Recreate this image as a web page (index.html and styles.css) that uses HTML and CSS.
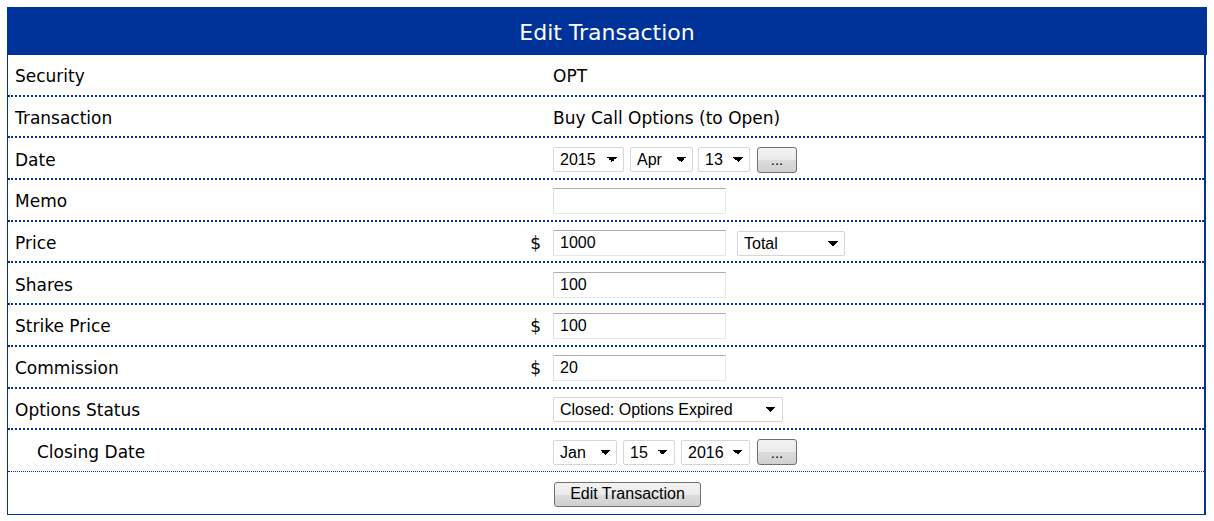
FILE: index.html
```html
<!DOCTYPE html>
<html lang="en">
<head>
    <meta charset="UTF-8">
    <title>Edit Transaction</title>
    <link rel="stylesheet" href="styles.css">
</head>
<body>

    <!-- Edit transaction form -->
    <form class="panel" onsubmit="return false">
        <div class="panel-title">Edit Transaction</div>

        <div class="row">
            <div class="label">Security</div>
            <div class="unit"></div>
            <div class="value">OPT</div>
        </div>

        <div class="row">
            <div class="label">Transaction</div>
            <div class="unit"></div>
            <div class="value">Buy Call Options (to Open)</div>
        </div>

        <div class="row">
            <div class="label">Date</div>
            <div class="unit"></div>
            <div class="value">
                <select class="sel sel-year"><option>2015</option></select>
                <select class="sel sel-month"><option>Apr</option></select>
                <select class="sel sel-day"><option>13</option></select>
                <button type="button" class="btn btn-cal">...</button>
            </div>
        </div>

        <div class="row">
            <div class="label">Memo</div>
            <div class="unit"></div>
            <div class="value"><input type="text" class="txt" value=""></div>
        </div>

        <div class="row">
            <div class="label">Price</div>
            <div class="unit">$</div>
            <div class="value">
                <input type="text" class="txt" value="1000">
                <select class="sel sel-total"><option>Total</option></select>
            </div>
        </div>

        <div class="row">
            <div class="label">Shares</div>
            <div class="unit"></div>
            <div class="value"><input type="text" class="txt" value="100"></div>
        </div>

        <div class="row">
            <div class="label">Strike Price</div>
            <div class="unit">$</div>
            <div class="value"><input type="text" class="txt" value="100"></div>
        </div>

        <div class="row">
            <div class="label">Commission</div>
            <div class="unit">$</div>
            <div class="value"><input type="text" class="txt" value="20"></div>
        </div>

        <div class="row">
            <div class="label">Options Status</div>
            <div class="unit"></div>
            <div class="value">
                <select class="sel sel-status"><option>Closed: Options Expired</option></select>
            </div>
        </div>

        <div class="row row-thin">
            <div class="label sub">Closing Date</div>
            <div class="unit"></div>
            <div class="value">
                <select class="sel sel-cmonth"><option>Jan</option></select>
                <select class="sel sel-cday"><option>15</option></select>
                <select class="sel sel-cyear"><option>2016</option></select>
                <button type="button" class="btn btn-cal">...</button>
            </div>
        </div>

        <div class="row row-last">
            <div class="label"></div>
            <div class="unit"></div>
            <div class="value"><button type="submit" class="btn btn-submit">Edit Transaction</button></div>
        </div>
    </form>

</body>
</html>
```

FILE: styles.css
```css
body {
    margin: 7px;
    background-color: #fff;
    font-family: "DejaVu Sans", "Noto Sans", sans-serif;
}

.panel {
    display: flex;
    flex-direction: column;
    border-left: 1px solid #003399;
    border-right: 2px solid #003399;
    border-bottom: 1px solid #003399;
    margin-right: 1px;
}

.panel-title {
    height: 48px;
    box-sizing: border-box;
    padding-top: 3px;
    margin-left: -1px;
    margin-right: -3px;
    background-color: #003399;
    color: #fff;
    font-size: 22px;
    display: flex;
    align-items: center;
    justify-content: center;
}

.row {
    height: 41.7px;
    box-sizing: border-box;
    padding-top: 3px;
    display: grid;
    grid-template-columns: 519px 20px 1fr;
    align-items: center;
    border-bottom: 2px dotted #003399;
    font-size: 17px;
    color: #000;
}

.row-thin {
    border-bottom-width: 1px;
}

.row-last {
    border-bottom: none;
}

.label {
    padding-left: 7px;
}

.label.sub {
    padding-left: 29px;
}

.unit {
    text-align: right;
    padding-right: 6px;
}

.value {
    padding-left: 6px;
    display: flex;
    align-items: center;
    gap: 6px;
}

/* form controls */
.txt,
.sel,
.btn {
    font-family: "Liberation Sans", Arial, sans-serif;
    font-size: 16px;
    color: #000;
    margin: 0;
    box-sizing: border-box;
}

.txt {
    width: 173px;
    height: 26px;
    padding: 0 6px;
    border: 1px solid #e3e9ef;
    border-top-color: #abadb3;
    border-left-color: #dadfe6;
    outline: none;
}

.sel {
    -webkit-appearance: none;
    appearance: none;
    height: 25px;
    padding: 0 22px 0 6px;
    border: 1px solid #d6d6d6;
    border-radius: 2px;
    background-color: #fff;
    background-image:
        linear-gradient(45deg, transparent 50%, #000 50%),
        linear-gradient(-45deg, transparent 50%, #000 50%);
    background-size: 5px 5px, 5px 5px;
    background-position: right 11px center, right 6px center;
    background-repeat: no-repeat;
}

.sel-year { width: 71px; }
.sel-month { width: 63px; }
.sel-day { width: 52px; margin-left: -1px; }
.sel-total { width: 108px; margin-left: 5px; }
.sel-status { width: 230px; }
.sel-cmonth { width: 64px; }
.sel-cday { width: 52px; }
.sel-cyear { width: 69px; }

.btn {
    border: 1px solid #707070;
    border-radius: 3px;
    background: linear-gradient(#f2f2f2 0%, #ebebeb 50%, #dddddd 51%, #cfcfcf 100%);
    cursor: pointer;
}

.btn-cal {
    width: 40px;
    height: 26px;
    font-size: 15px;
    margin-left: 1px;
    padding: 0;
}

.btn-submit {
    width: 147px;
    height: 25px;
    font-size: 16px;
    padding: 0;
    margin-left: 1px;
}
```
